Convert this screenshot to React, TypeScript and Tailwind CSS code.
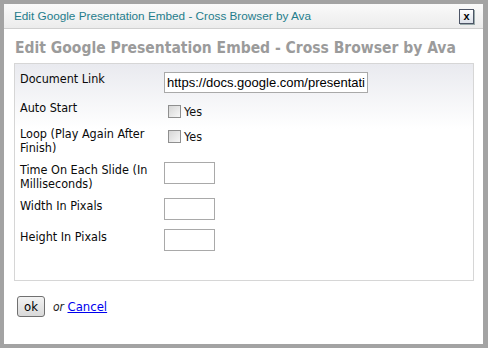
import React from "react";

const labelFont = "font-['DejaVu_Sans_Condensed','DejaVu_Sans',sans-serif]";

function Check() {
  return (
    <span className="flex items-center gap-[3px] text-[12.5px] text-[#111]">
      <span className="mt-[2px] block h-[13px] w-[13px] border border-[#8f8f8f] bg-gradient-to-br from-[#d6d6d6] to-[#f7f7f7]" />
      <span className="mt-[4px]">Yes</span>
    </span>
  );
}

function SmallBox() {
  return <div className="h-[22px] w-[51px] border border-[#a9a9a9] bg-white" />;
}

export default function App() {
  return (
    <div className="h-[348px] w-[488px] bg-[#a3a3a3] pb-[4px] pl-[4px] pr-[5px] pt-[4px]">
      <div className={`flex h-full flex-col bg-white ${labelFont}`}>
        {/* title bar */}
        <div className="flex h-[25px] items-center justify-between border-b border-[#cfcfcf] bg-gradient-to-b from-[#fafafa] to-[#ececec] pl-[10px] pr-[9px]">
          <span className="font-['Liberation_Sans',Arial,sans-serif] text-[11.75px] text-[#1f7d8c]">
            Edit Google Presentation Embed - Cross Browser by Ava
          </span>
          <button className="flex h-[15px] w-[15px] items-center justify-center border border-[#4d5566] bg-gradient-to-b from-white to-[#dde2ea] font-['Liberation_Sans',Arial,sans-serif] text-[11px] font-bold leading-none text-black shadow-[1px_1px_0_#9aa]">
            x
          </button>
        </div>

        <h1 className="ml-[11px] mt-[9px] whitespace-nowrap text-[15.5px] font-bold leading-[20px] text-[#9b9b9b]">
          Edit Google Presentation Embed - Cross Browser by Ava
        </h1>

        <div className="ml-[10px] mr-[9px] mt-[5px] h-[218px] border border-[#d6d6d6] bg-gradient-to-b from-[#e9eaef] to-white to-[30%] px-[5px] pt-[8px] text-[12.5px] leading-[14px] text-[#0a0a0a]">
          <div className="flex">
            <div className="w-[144px]">Document Link</div>
            <input
              readOnly
              value="https://docs.google.com/presentation/d/1abc/embed"
              className="h-[21px] w-[204px] border border-[#a9a9a9] bg-white px-[2px] font-['Liberation_Sans',Arial,sans-serif] text-[13px] text-black outline-none"
            />
          </div>
          <div className="mt-[8px] flex">
            <div className="w-[148px]">Auto Start</div>
            <Check />
          </div>
          <div className="mt-[8px] flex">
            <div className="w-[148px]">
              Loop (Play Again After
              <br />
              Finish)
            </div>
            <div className="-mt-[1px]">
              <Check />
            </div>
          </div>
          <div className="mt-[7px] flex">
            <div className="w-[144px] pt-[1px]">
              Time On Each Slide (In
              <br />
              Milliseconds)
            </div>
            <SmallBox />
          </div>
          <div className="mt-[7px] flex">
            <div className="w-[144px] pt-[1px]">Width In Pixals</div>
            <SmallBox />
          </div>
          <div className="mt-[9px] flex">
            <div className="w-[144px] pt-[1px]">Height In Pixals</div>
            <SmallBox />
          </div>
        </div>

        <div className="ml-[13px] mt-[15px] flex items-center gap-[8px]">
          <button className="h-[21px] w-[28px] rounded-[3px] border border-[#707070] bg-gradient-to-b from-[#f3f3f3] to-[#d9d9d9] text-[13px] leading-none text-black">
            ok
          </button>
          <span className="mt-[1px] text-[12px]">
            <span className="italic text-[#222]">or</span>{" "}
            <a href="#" className="text-[13px] text-[#0000ee] underline">
              Cancel
            </a>
          </span>
        </div>
      </div>
    </div>
  );
}
